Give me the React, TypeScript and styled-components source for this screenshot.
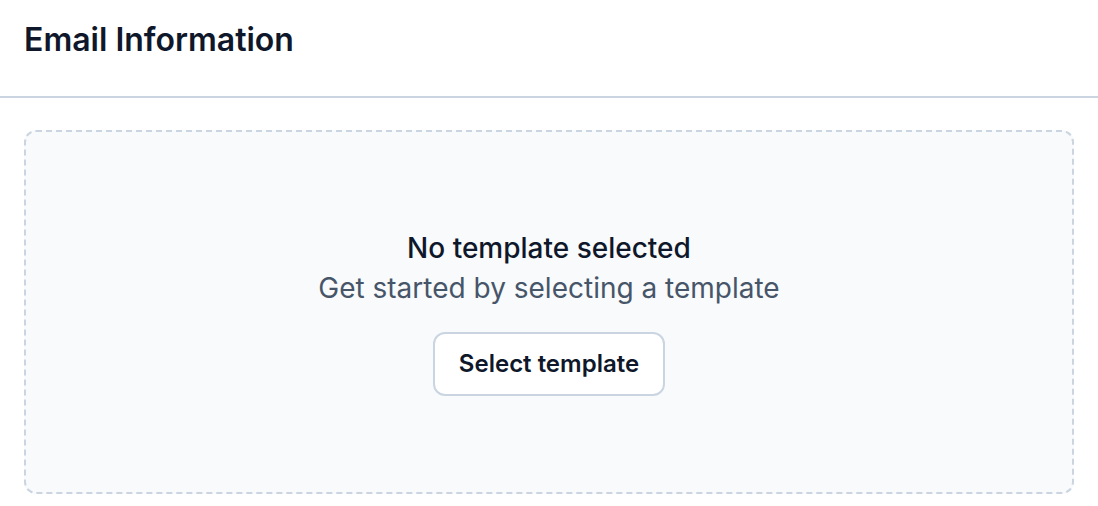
import styled, { createGlobalStyle } from 'styled-components'

const GlobalStyle = createGlobalStyle`
  html, body {
    margin: 0;
    padding: 0;
    background: #ffffff;
    font-family: Inter, "Noto Sans", sans-serif;
    -webkit-font-smoothing: antialiased;
  }
`

const Page = styled.div`
  width: 100%;
  display: flex;
  flex-direction: column;
`

const Header = styled.header`
  padding: 20px 24px 36px;
  border-bottom: 2px solid #cbd5e1;
`

const Title = styled.h2`
  margin: 0;
  font-size: 32px;
  line-height: 40px;
  font-weight: 600;
  color: #0f172a;
`

const Body = styled.div`
  padding: 32px 24px 0;
`

const EmptyBox = styled.div`
  border: 2px dashed #cbd5e1;
  border-radius: 12px;
  background: #f8fafc;
  padding: 96px 24px;
  display: flex;
  flex-direction: column;
  align-items: center;
  text-align: center;
`

const EmptyTitle = styled.h3`
  margin: 0;
  font-size: 28px;
  line-height: 40px;
  font-weight: 500;
  color: #0f172a;
`

const EmptyText = styled.p`
  margin: 0;
  font-size: 28px;
  line-height: 40px;
  font-weight: 400;
  color: #475569;
`

const Button = styled.button`
  margin-top: 24px;
  padding: 10px 24px;
  border: 2px solid #cbd5e1;
  border-radius: 12px;
  background: #ffffff;
  font-family: inherit;
  font-size: 24px;
  line-height: 40px;
  font-weight: 600;
  color: #0f172a;
  cursor: pointer;
`

export default function App() {
  return (
    <Page>
      <GlobalStyle />
      <Header>
        <Title>Email Information</Title>
      </Header>
      <Body>
        <EmptyBox>
          <EmptyTitle>No template selected</EmptyTitle>
          <EmptyText>Get started by selecting a template</EmptyText>
          <Button>Select template</Button>
        </EmptyBox>
      </Body>
    </Page>
  )
}
